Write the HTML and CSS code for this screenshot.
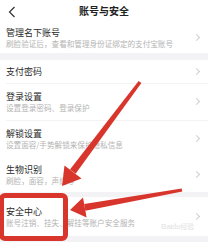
FILE: index.html
```html
<!DOCTYPE html>
<html lang="zh">
<head>
<meta charset="utf-8">
<link rel="stylesheet" href="styles.css">
</head>
<body>
<div class="page">
  <header class="bar">
    <svg class="back" width="8" height="12" viewBox="0 0 8 12"><path d="M6.5 1 L1.5 6 L6.5 11" fill="none" stroke="#333" stroke-width="1.2"/></svg>
    <div class="bar-title">账号与安全</div>
  </header>
  <div class="row r1">
    <div class="txt"><div class="t">管理名下账号</div><div class="s">刷脸验证后，查看和管理身份证绑定的支付宝账号</div></div>
    <span class="chev"></span>
  </div>
  <div class="gap g1"></div>
  <div class="row r2 line">
    <div class="txt"><div class="t">支付密码</div></div>
    <span class="chev"></span>
  </div>
  <div class="row r3 line">
    <div class="txt"><div class="t">登录设置</div><div class="s">设置登录密码、登录保护</div></div>
    <span class="chev"></span>
  </div>
  <div class="row r4 line">
    <div class="txt"><div class="t">解锁设置</div><div class="s">设置面容/手势解锁来保护隐私信息</div></div>
    <span class="chev"></span>
  </div>
  <div class="row r5">
    <div class="txt"><div class="t">生物识别</div><div class="s">刷脸，面容，声纹等</div></div>
    <span class="chev"></span>
  </div>
  <div class="gap g2"></div>
  <div class="row r6">
    <div class="txt"><div class="t">安全中心</div><div class="s">账号注销、挂失、解挂等账户安全服务</div></div>
    <span class="chev"></span>
  </div>
  <div class="gap g3"></div>

  <div class="wm">Bai<span class="wm-cn">du经验</span></div>
  <div class="redbox"></div>
  <svg class="arrows" width="208" height="242" viewBox="0 0 208 242">
    <polygon fill="#d8362c" points="141.4,83 138.6,81 70,169.5 75.6,173.7"/>
    <polygon fill="#d8362c" points="62,186 64.5,165.5 81.5,178.5"/>
    <polygon fill="#d8362c" points="182.3,191.6 181.7,188.4 84.2,204 85.4,210.8"/>
    <polygon fill="#d8362c" points="70,210 83,197.4 86.6,217.4"/>
  </svg>
</div>
</body>
</html>
```
FILE: styles.css
```css
html, body {
  margin: 0;
  padding: 0;
  background: #fff;
}
.page {
  position: relative;
  width: 208px;
  height: 242px;
  overflow: hidden;
  font-family: "Noto Sans CJK SC", "Noto Sans", sans-serif;
  display: flex;
  flex-direction: column;
}
.bar {
  height: 22px;
  flex: none;
  display: flex;
  align-items: center;
  justify-content: center;
  position: relative;
}
.back {
  position: absolute;
  left: 8px;
  top: 6px;
}
.bar-title {
  font-size: 10px;
  font-weight: 700;
  color: #222;
  line-height: 12px;
}
.row {
  flex: none;
  display: flex;
  align-items: center;
  padding: 0 9px 0 6px;
  box-sizing: border-box;
  position: relative;
}
.line::before {
  content: "";
  position: absolute;
  left: 6px;
  right: 0;
  top: 0;
  height: 1px;
  background: #f3f3f3;
}
.r2.line::before { display: none; }
.r1 { height: 31px; }
.r2 { height: 23px; }
.r3 { height: 37px; }
.r4 { height: 37px; }
.r5 { height: 35px; }
.r6 { height: 39px; }
.gap { flex: none; background: #f3f3f5; }
.g1 { height: 7px; }
.g2 { height: 5px; }
.g3 { flex: 1; }
.txt {
  flex: 1;
  min-width: 0;
  display: flex;
  flex-direction: column;
  gap: 1px;
}
.t {
  font-size: 9px;
  line-height: 11px;
  color: #2a2a2a;
  white-space: nowrap;
}
.s {
  font-size: 7.6px;
  line-height: 10px;
  color: #b3b3b3;
  white-space: nowrap;
}
.chev {
  width: 4px;
  height: 4px;
  border-top: 1px solid #cfcfcf;
  border-right: 1px solid #cfcfcf;
  transform: rotate(45deg);
  flex: none;
}
.redbox {
  position: absolute;
  left: -1px;
  top: 193px;
  width: 69px;
  height: 48px;
  box-sizing: border-box;
  border: 5px solid #d8362c;
  border-radius: 6px;
}
.arrows {
  position: absolute;
  left: 0;
  top: 0;
}
.wm {
  position: absolute;
  left: 161px;
  top: 222px;
  font-family: "Liberation Sans", sans-serif;
  font-size: 8px;
  line-height: 9px;
  color: #e2e2e2;
  letter-spacing: -0.2px;
}
.wm-cn {
  font-family: "Noto Sans CJK SC", sans-serif;
  font-size: 7px;
}
```
